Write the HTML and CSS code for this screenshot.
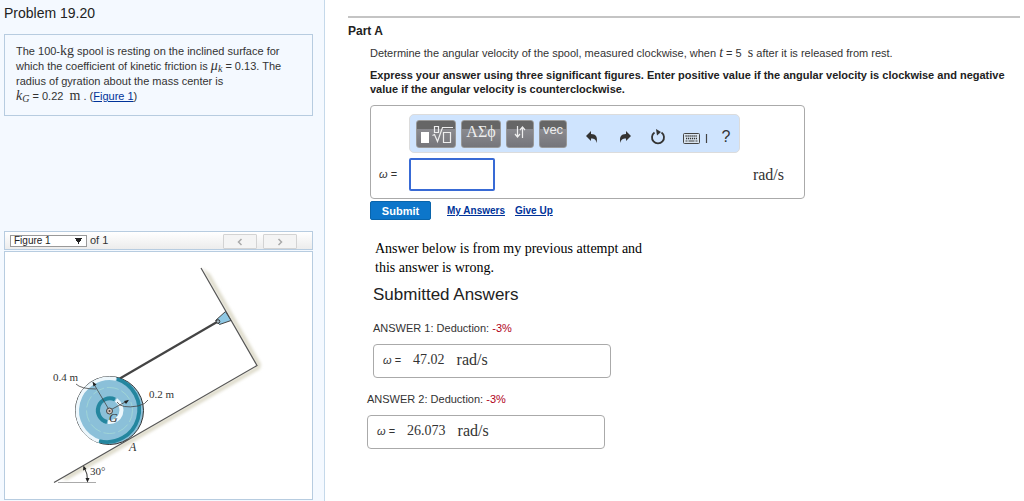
FILE: index.html
```html
<!DOCTYPE html>
<html lang="en">
<head>
<meta charset="utf-8">
<title>Problem 19.20</title>
<link rel="stylesheet" href="styles.css">
</head>
<body>
<div class="page">
  <aside class="sidebar">
    <h1 class="problem-title">Problem 19.20</h1>
    <p class="problem">The 100-<span class="unit">kg</span> spool is resting on the inclined surface for<br>
      which the coefficient of kinetic friction is <i class="math">μ<sub>k</sub></i> = 0.13. The<br>
      radius of gyration about the mass center is<br>
      <i class="math">k<sub>G</sub></i> = 0.22 &nbsp;<span class="unit">m</span> . (<a href="#figure">Figure 1</a>)</p>
    <div class="figure-bar">
      <select class="figure-select" id="figure-select" aria-label="Figure"><option>Figure 1</option></select>
      <label class="figure-count" for="figure-select">of 1</label>
      <button class="nav" type="button" aria-label="Previous figure"><svg width="6" height="8" viewBox="0 0 6 8"><path d="M4.500 1 1.500 4l3 3" fill="none" stroke="#aaa" stroke-width="1.500"/></svg></button>
      <button class="nav" type="button" aria-label="Next figure"><svg width="6" height="8" viewBox="0 0 6 8"><path d="M1.500 1l3 3-3 3" fill="none" stroke="#aaa" stroke-width="1.500"/></svg></button>
    </div>
    <div class="figure" id="figure">
      <svg class="drawing" viewBox="5 253 307 247" role="img" aria-label="Spool on a 30 degree incline">
        <defs>
          <filter id="soft" x="-20%" y="-20%" width="140%" height="140%"><feGaussianBlur stdDeviation="1.600"/></filter>
        </defs>
        <path d="M202 269 257 367 61 479l6 2 193-111 1-5-51-90z" fill="#dedbcb" filter="url(#soft)"/>
        <path d="M201 269 257 366.500 54 483.500V400L150 260z" fill="#fff"/>
        <path d="M201 269 257 366.500 54 483.500" fill="none" stroke="#555" stroke-width="1.200"/>
        <path d="M58 483.500H96" stroke="#aaa"/>
        <path d="M119 380 217 323" stroke="#444" stroke-width="2.200"/>
        <path d="M225.500 312.500 231 321.500 219.500 325.500 215.500 321.500z" fill="#8fc8e4" stroke="#444"/>
        <circle cx="218" cy="322.500" r="1.800" fill="#a9bcc5" stroke="#333"/>
        <circle cx="109.500" cy="411.500" r="34" fill="#8bc0d9" stroke="#333"/>
        <path d="M100 442.500A32.300 32.300 0 0 1 116 380" fill="none" stroke="#edf7fc" stroke-width="3.500"/>
        <path d="M117 380A32.300 32.300 0 0 1 99 442" fill="none" stroke="#24869f" stroke-width="3.800"/>
        <circle cx="109.500" cy="411.500" r="23" fill="none" stroke="#a5d9d5" stroke-width=".8" stroke-dasharray="12 3"/>
        <path d="M115 400.500A12 12 0 1 0 107 423" fill="none" stroke="#24869f" stroke-width="4"/>
        <path d="M116 401A12 12 0 0 1 108 423" fill="none" stroke="#edf7fc" stroke-width="4"/>
        <path d="M109.500 411.500 93 383.500M109.500 411.500 128 401.500M76 385q5 5 20 5M117 403q4 7 21 4 8-2 10-6" fill="none" stroke="#444" stroke-width=".8"/>
        <path d="M92.500 382.500l1 5 3-2zM129 401l-5 1 2 3z" fill="#222"/>
        <circle cx="109.500" cy="412" r="3" fill="#d4c4bd" stroke="#444"/>
        <circle cx="109.500" cy="412" r="1" fill="#444"/>
        <path d="M84 468q4 7 3.500 14" fill="none" stroke="#333"/>
        <path d="M83.500 466.500l-.5 5 3.500-1.500zM87.500 483.500l-2-4.500h4z" fill="#222"/>
        <text class="dim" x="53" y="382">0.4 m</text>
        <text class="dim" x="149" y="399">0.2 m</text>
        <text class="dim" x="90" y="476">30°</text>
        <text class="dim point" x="109" y="423">G</text>
        <text class="dim point" x="129" y="452">A</text>
      </svg>
    </div>
  </aside>

  <main class="content">
    <section class="part">
      <h2 class="part-title">Part A</h2>
      <div class="part-body">
        <p class="question">Determine the angular velocity of the spool, measured clockwise, when <i class="math">t</i> = 5 &nbsp;<span class="unit">s</span> after it is released from rest.</p>
        <p class="instruction">Express your answer using three significant figures. Enter positive value if the angular velocity is clockwise and negative value if the angular velocity is counterclockwise.</p>
        <form class="answer-box">
          <div class="toolbar">
            <button class="tool tool-wide" type="button" aria-label="Templates"><svg width="36" height="22" viewBox="0 0 36 22"><path d="M3 8h8v11H3z" fill="#fff"/><path d="M14.500 11.500l2-1 3 7L24.500 3.500H35M25.500 8.500h7v10h-7zM16.500 2.500h4v6h-4z" fill="none" stroke="#eee" stroke-width="1.200"/></svg></button>
            <button class="tool tool-wide tool-greek" type="button">ΑΣϕ</button>
            <button class="tool" type="button" aria-label="Arrows"><svg width="14" height="16" viewBox="0 0 14 16"><path d="M4.500 2v11M2 10l2.500 3L7 10M9.500 14V3M7 6l2.500-3L12 6" fill="none" stroke="#eee" stroke-width="1.200"/></svg></button>
            <button class="tool tool-vec" type="button">vec</button>
            <button class="icon icon-undo" type="button" aria-label="Undo"><svg width="14" height="14" viewBox="0 0 14 14"><path d="M6 1v3c5 0 7 3 5.500 9C11 9.500 9.500 8.500 6 8.500V11L1 6z" fill="#333"/></svg></button>
            <button class="icon" type="button" aria-label="Redo"><svg width="14" height="14" viewBox="0 0 14 14"><path d="M8 1v3C3 4 1 7 2.500 13 3 9.500 4.500 8.500 8 8.500V11l5-5z" fill="#333"/></svg></button>
            <button class="icon" type="button" aria-label="Reset"><svg width="16" height="16" viewBox="0 0 16 16"><path d="M4.500 3.500A6 6 0 1 0 11.500 3.500" fill="none" stroke="#333" stroke-width="1.800"/><path d="M6 0l5 3-4 3.500z" fill="#333"/></svg></button>
            <button class="icon icon-keys" type="button" aria-label="Keyboard"><svg width="26" height="14" viewBox="0 0 26 14"><rect x="1.500" y="3.500" width="16" height="10" rx="1" fill="#d9e4ef" stroke="#444"/><path d="M3.500 6h12M4 8.500h11" stroke="#333" stroke-width="1.400" stroke-dasharray="1.200 .8"/><path d="M3.500 11h2M6.500 11h6M13.500 11h2M24.500 4v9" stroke="#444" stroke-width="1.200"/></svg></button>
            <button class="icon icon-help" type="button">?</button>
          </div>
          <div class="entry">
            <label class="entry-label" for="omega"><i>ω</i> =</label>
            <input class="entry-input" id="omega" type="text">
            <span class="entry-unit">rad/s</span>
          </div>
        </form>
        <div class="actions">
          <button class="submit" type="button">Submit</button>
          <a href="#answers">My Answers</a>
          <a href="#give-up">Give Up</a>
        </div>
        <p class="note">Answer below is from my previous attempt and<br>this answer is wrong.</p>
        <section class="submitted" id="answers">
          <h3 class="submitted-title">Submitted Answers</h3>
          <div class="submission submission-latest">
            <p class="deduction">ANSWER 1: Deduction: <span class="penalty">-3%</span></p>
            <div class="result"><span class="result-label"><i>ω</i> =</span><span class="result-value">47.02</span><span class="result-unit">rad/s</span></div>
          </div>
          <div class="submission">
            <p class="deduction">ANSWER 2: Deduction: <span class="penalty">-3%</span></p>
            <div class="result"><span class="result-label"><i>ω</i> =</span><span class="result-value">26.073</span><span class="result-unit">rad/s</span></div>
          </div>
        </section>
      </div>
    </section>
  </main>
</div>
</body>
</html>
```
FILE: styles.css
```css
* { box-sizing: border-box; }
body {
  margin: 0;
  background: #fff;
  color: #333;
  font: 11px/15px "Liberation Sans", Arial, sans-serif;
}
h1, h2, h3, p { margin: 0; font-weight: normal; }
button { padding: 0; border: 0; background: none; font-family: inherit; }
a { color: #039; }
svg { display: block; }

.page { display: flex; min-height: 100vh; }
.sidebar {
  flex: 0 0 325px;
  padding: 4px 11px 0 4px;
  border-right: 1px solid #c5d9ea;
  background: #f4f9ff;
}
.problem-title { color: #222; font-size: 14px; line-height: 18px; }
.problem {
  margin-top: 12px;
  padding: 9px 11px 11px;
  border: 1px solid #b7cce0;
  white-space: nowrap;
}
.math, .unit { font-family: "Liberation Serif", serif; font-size: 14px; line-height: 1; }
.math sub { font-size: 10px; line-height: 0; vertical-align: -2px; }

.figure-bar {
  display: flex;
  align-items: center;
  margin-top: 115px;
  height: 19px;
  padding: 0 15px 0 5px;
  border: 1px solid #b7cce0;
  background: linear-gradient(#fff, #ececec);
}
.figure-select {
  appearance: none;
  width: 77px;
  height: 12px;
  padding: 0 3px;
  border: 1px solid #999;
  border-radius: 0;
  background: conic-gradient(from -30deg at 50% 100%, #222 60deg, transparent 0) 64px 2px / 7px 6px no-repeat, #fff;
  color: #222;
  font: 10px/10px "Liberation Sans", Arial, sans-serif;
}
.figure-count { flex: 1; margin-left: 3px; }
.nav {
  display: grid;
  place-items: center;
  width: 34px;
  height: 15px;
  margin: 2px 0 0 6px;
  border: 1px solid #d3d3d3;
  border-radius: 1px;
  background: #f4f4f4;
}
.figure { margin-top: 1px; border: 1px solid #b7cce0; background: #fff; }
.drawing { width: 100%; height: auto; }
.dim { fill: #333; font: 11px "Liberation Serif", serif; }
.point { font-size: 12px; font-style: italic; }

.content { flex: 1; min-width: 0; padding: 16px 4px 0 23px; }
.part { border-top: 2px solid #c4c4c4; }
.part-title { margin-top: 6px; color: #222; font-size: 12px; font-weight: bold; line-height: 15px; }
.part-body { padding-left: 22px; }
.question { margin-top: 7px; }
.instruction { margin-top: 7px; color: #222; font-weight: bold; line-height: 14px; }
.answer-box {
  max-width: 435px;
  margin-top: 9px;
  padding: 8px 8px 7px;
  border: 1px solid #aaa;
  border-radius: 4px;
}
.toolbar {
  display: flex;
  align-items: flex-start;
  width: 331px;
  height: 39px;
  margin-left: 30px;
  padding: 5px 0 5px 6px;
  border: 1px solid #dcdcdc;
  border-radius: 5px;
  background: #cfe4fe;
}
.tool {
  display: grid;
  flex: none;
  justify-items: center;
  width: 28px;
  height: 28px;
  margin-right: 5px;
  padding-top: 3px;
  align-content: start;
  border: 1px solid #999;
  border-radius: 3px;
  background: linear-gradient(#666 0 30%, #8b8b90 31%, #75757a);
  color: #eee;
}
.tool-wide { width: 40px; }
.tool-greek { font: 16px/16px "Liberation Serif", serif; }
.tool-vec { padding-top: 2px; font-size: 13px; line-height: 14px; }
.icon {
  display: grid;
  flex: none;
  place-items: center;
  width: 33px;
  height: 34px;
  color: #333;
}
.icon-undo { margin-left: 3px; }
.icon-keys { width: 42px; }
.icon-help { width: 20px; font-size: 16px; }
.entry { display: flex; align-items: center; margin-top: 5px; }
.entry-label { width: 30px; }
.entry-input {
  width: 86px;
  height: 33px;
  padding: 0 4px;
  border: 2px solid #386ad5;
  border-radius: 2px;
  outline: 0;
  background: #fff;
}
.entry-unit, .result-unit { font: 16px "Liberation Serif", serif; }
.entry-unit { margin-left: auto; padding-right: 12px; }
.actions { display: flex; align-items: center; gap: 10px; margin-top: 2px; font-size: 10px; font-weight: bold; }
.submit {
  width: 61px;
  height: 19px;
  margin-right: 6px;
  border: 1px solid #0964ab;
  border-radius: 2px;
  background: #0d76ca;
  color: #fff;
  font-size: 11px;
  font-weight: bold;
}
.note { margin: 19px 0 0 5px; color: #000; font: 14px/19px "Liberation Serif", serif; }
.submitted { margin-left: -3px; }
.submitted-title { margin: 7px 0 0 6px; color: #222; font-size: 17px; line-height: 22px; }
.submission { max-width: 238px; margin-top: 14px; }
.submission-latest { margin: 15px 0 0 6px; }
.penalty { color: #b00020; }
.result {
  display: flex;
  align-items: center;
  gap: 12px;
  height: 34px;
  margin-top: 8px;
  padding: 0 9px 2px;
  border: 1px solid #aaa;
  border-radius: 4px;
}
.result-value { font: 14px "Liberation Serif", serif; }
```
